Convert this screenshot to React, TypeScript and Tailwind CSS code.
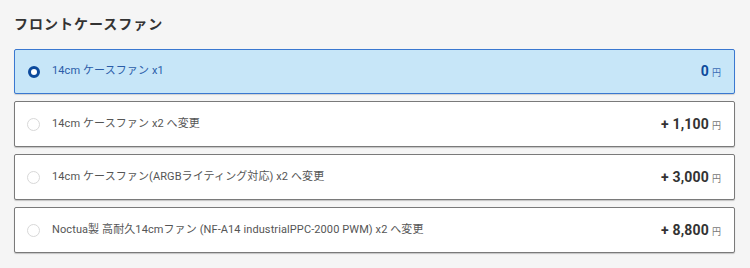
import React from "react";

const options = [
  { label: "14cm ケースファン x1", price: "0", selected: true },
  { label: "14cm ケースファン x2 へ変更", price: "+ 1,100", selected: false },
  { label: "14cm ケースファン(ARGBライティング対応) x2 へ変更", price: "+ 3,000", selected: false },
  { label: "Noctua製 高耐久14cmファン (NF-A14 industrialPPC-2000 PWM) x2 へ変更", price: "+ 8,800", selected: false },
];

export default function App() {
  return (
    <div
      className="w-[750px] h-[268px] bg-[#f5f5f5] pl-[14px] pr-[15px] pt-[14px]"
      style={{ fontFamily: 'Roboto, "Noto Sans CJK JP", sans-serif' }}
    >
      <h2 className="text-[14px] font-bold text-[#333] leading-[20px] tracking-[1px]">フロントケースファン</h2>
      <div className="mt-[15px] flex flex-col gap-[7px]">
        {options.map((o, i) => (
          <div
            key={i}
            className={
              o.selected
                ? "h-[45px] flex items-center rounded-[2px] border border-[#3a78d0] bg-[#c7e6f8] shadow-[0_1px_1px_rgba(0,0,0,0.15)]"
                : "h-[46px] flex items-center rounded-[2px] border border-[#7a7a7a] bg-white shadow-[0_1px_1px_rgba(0,0,0,0.2)]"
            }
          >
            <div className="w-[25px] flex justify-end">
              {o.selected ? (
                <span className="block w-[12px] h-[12px] rounded-full border-[3.5px] border-[#0d4a9c] bg-white" />
              ) : (
                <span className="block w-[13px] h-[13px] rounded-full border border-[#d8d8d8] bg-white" />
              )}
            </div>
            <span
              className={
                "ml-[12px] text-[11px] tracking-[0.1px] " +
                (o.selected ? "text-[#2a5ca8]" : "text-[#555]")
              }
            >
              {o.label}
            </span>
            <div className="ml-auto pr-[13px] flex items-baseline">
              <span className={"text-[14px] font-bold tracking-[0.2px] " + (o.selected ? "text-[#0d4a9c]" : "text-[#333]")}>
                {o.price}
              </span>
              <span className={"ml-[3px] text-[9px] " + (o.selected ? "text-[#3a6bb5]" : "text-[#777]")}>円</span>
            </div>
          </div>
        ))}
      </div>
    </div>
  );
}
